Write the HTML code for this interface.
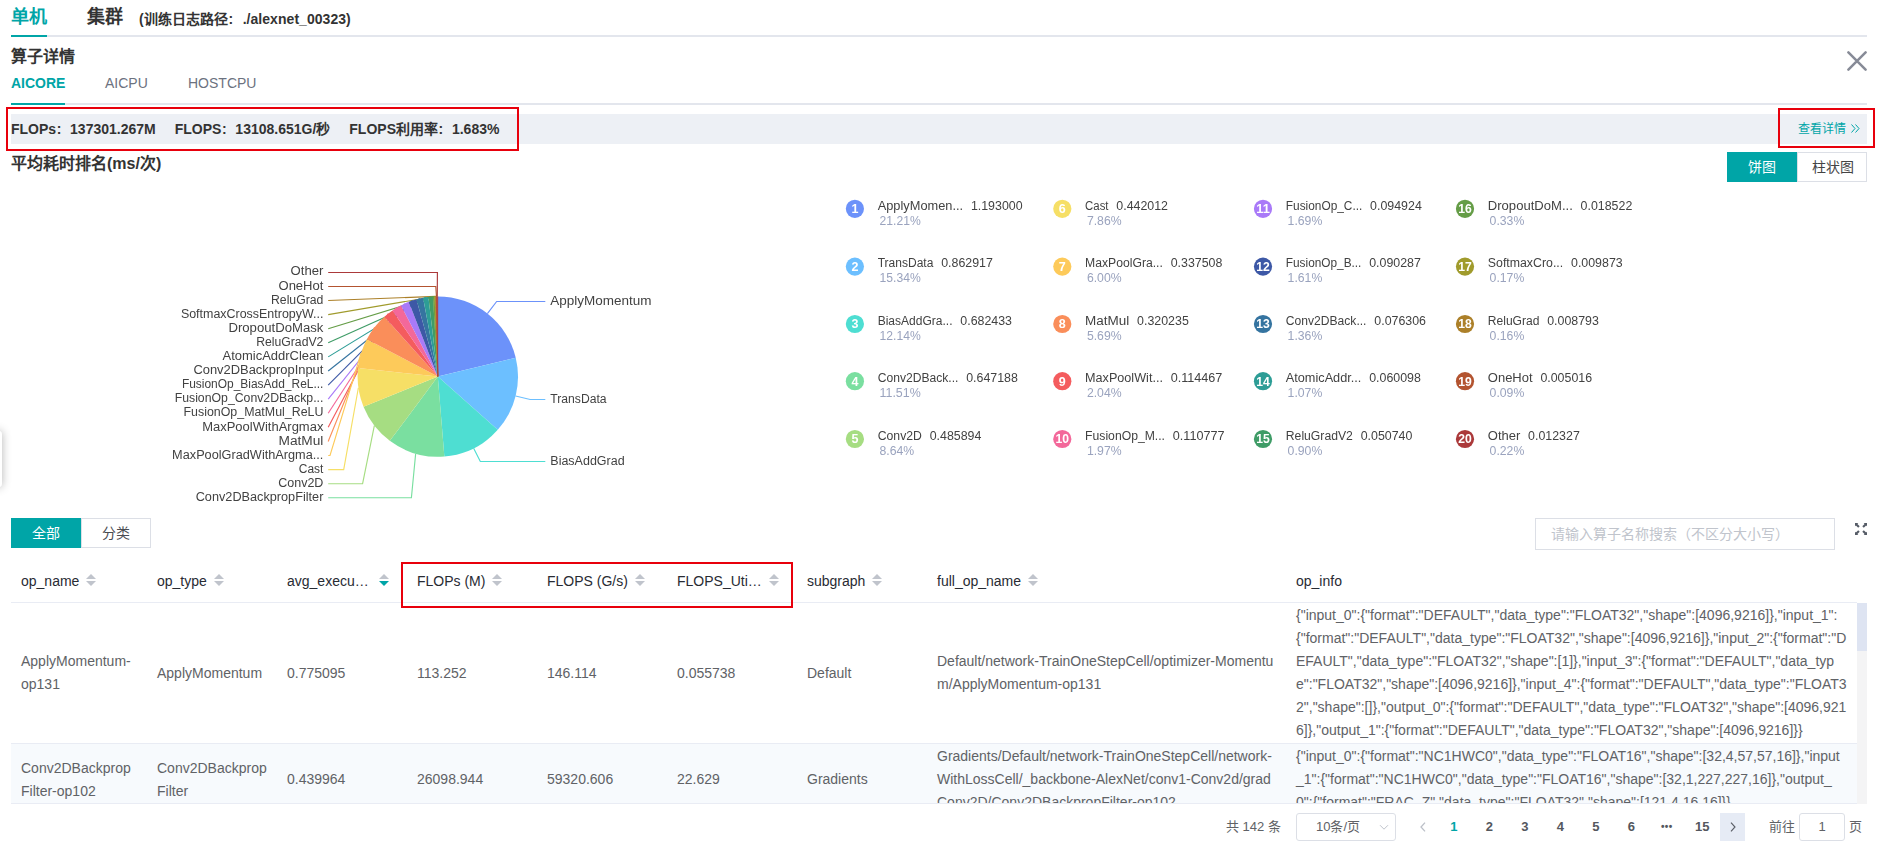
<!DOCTYPE html>
<html lang="zh-CN"><head><meta charset="utf-8"><title>profiling</title>
<style>
*{box-sizing:border-box;margin:0;padding:0}
html,body{width:1883px;height:855px;overflow:hidden;background:#fff}
body{font-family:"Liberation Sans", sans-serif;color:#333;position:relative;font-size:14px}
.abs{position:absolute;white-space:nowrap}
.chart{position:absolute;left:150px;top:185px;will-change:transform;opacity:0.999}
.tab1{font-size:18px;font-weight:bold;line-height:20px;top:7px}
.line{position:absolute;height:2px;background:#E3E6ED}
.btn{position:absolute;height:30px;line-height:28px;text-align:center;font-size:14px;border:1px solid #DCDFE6;background:#fff;color:#4a4c52;width:70px}
.btn.on{background:#00A5A7;border-color:#00A5A7;color:#fff}
.thead{position:absolute;left:11px;top:557px;width:1846px;height:46px;border-bottom:1px solid #E9ECF4;display:flex}
.th{height:45px;line-height:23px;padding:13px 10px 0 10px;color:#282B33;font-size:14px;white-space:nowrap;display:flex}
.st{display:inline-block;position:relative;width:10px;height:23px;margin-left:7px}
.st i{position:absolute;left:0;width:0;height:0;border:5px solid transparent}
.st .u{top:-1px}
.st .d{top:11px}
.tbody{position:absolute;left:11px;top:603px;width:1846px;height:201px;overflow:hidden;border-bottom:1px solid #E9ECF4}
.tr{display:flex;align-items:center;border-bottom:1px solid #E9ECF4}
.tr.r1{height:141px}
.tr.r2{height:72px;background:#F7FAFD}
.td{padding:0 10px;color:#606266;font-size:14px;line-height:23px;white-space:nowrap}
.pg{position:absolute;top:813px;height:28px;line-height:28px;font-size:13px;color:#606266;white-space:nowrap}
.pn{font-weight:bold;color:#54575E;width:35.5px;text-align:center}
</style></head><body>
<div class="abs tab1" style="left:11px;color:#00A5A7">单机</div>
<div class="abs tab1" style="left:87px;color:#333">集群</div>
<div class="abs" style="left:139px;top:10px;font-size:14px;font-weight:bold;line-height:18px;color:#333;letter-spacing:0.05px">(训练日志路径<span style="display:inline-block;margin:0 9.3px 0 0.6px">:</span>./alexnet_00323)</div>
<div class="line" style="left:11px;top:35px;width:1856px"></div>
<div class="line" style="left:11px;top:35px;width:36px;background:#00A5A7"></div>
<div class="abs" style="left:11px;top:47px;font-size:16px;font-weight:bold;line-height:20px;color:#333">算子详情</div>
<div class="abs" style="left:11px;top:74px;font-size:14px;font-weight:bold;line-height:18px;color:#00A5A7">AICORE</div>
<div class="abs" style="left:105px;top:74px;font-size:14px;line-height:18px;color:#6C7280">AICPU</div>
<div class="abs" style="left:188px;top:74px;font-size:14px;line-height:18px;color:#6C7280">HOSTCPU</div>
<div class="line" style="left:11px;top:103px;width:1856px"></div>
<div class="line" style="left:11px;top:103px;width:54px;background:#00A5A7"></div>
<svg class="abs" style="left:1847px;top:51px" width="20" height="20" viewBox="0 0 20 20"><path d="M1.4 1.4L18.6 18.6M18.6 1.4L1.4 18.6" stroke="#878B97" stroke-width="2.5" stroke-linecap="round" fill="none"/></svg>

<div class="abs" style="left:11px;top:114px;width:1856px;height:30px;background:#EDF0F5"></div>
<div class="abs" style="left:11px;top:114px;line-height:31px;font-size:14px;font-weight:bold;color:#333">FLOPs<span style="display:inline-block;margin:0 8.7px 0 0.6px">:</span>137301.267M<span style="display:inline-block;width:19px"></span>FLOPS<span style="display:inline-block;margin:0 8.7px 0 0.6px">:</span>13108.651G/秒<span style="display:inline-block;width:19px"></span>FLOPS利用率<span style="display:inline-block;margin:0 8.7px 0 0.6px">:</span>1.683%</div>
<div class="abs" style="left:1798px;top:114px;line-height:31px;font-size:12px;color:#00A5A7">查看详情</div>
<svg class="abs" style="left:1850px;top:123px" width="11" height="11" viewBox="0 0 11 11"><path d="M1.5 1.5L5 5.5L1.5 9.5M5.5 1.5L9 5.5L5.5 9.5" stroke="#00A5A7" stroke-width="1" fill="none"/></svg>
<div class="abs" style="left:6px;top:107px;width:513px;height:44px;border:2px solid #E8000C"></div>
<div class="abs" style="left:1778px;top:108px;width:97px;height:40px;border:2px solid #E8000C"></div>

<div class="abs" style="left:11px;top:154px;font-size:16px;font-weight:bold;line-height:20px;color:#333">平均耗时排名(ms/次)</div>
<div class="btn on" style="left:1727px;top:152px">饼图</div>
<div class="btn" style="left:1797px;top:152px;padding-left:1px;color:#444">柱状图</div>

<div class="abs" style="left:-8px;top:431px;width:10px;height:56px;background:#fff;border-radius:3px;box-shadow:0 0 10px rgba(0,0,0,0.3)"></div>

<div class="btn on" style="left:11px;top:518px">全部</div>
<div class="btn" style="left:81px;top:518px">分类</div>
<div class="abs" style="left:1535px;top:518px;width:300px;height:32px;border:1px solid #DCDFE6;line-height:30px;padding-left:15px;font-size:14px;color:#C0C4CC">请输入算子名称搜索（不区分大小写）</div>
<svg class="abs" style="left:1855px;top:523px" width="12" height="12" viewBox="0 0 12 12" fill="#555B66"><path d="M0 0h3.3L2.4 0.9 4.7 3.2 3.2 4.7 0.9 2.4 0 3.3z"/><path d="M0 0h3.3L2.4 0.9 4.7 3.2 3.2 4.7 0.9 2.4 0 3.3z" transform="translate(12,0) scale(-1,1)"/><path d="M0 0h3.3L2.4 0.9 4.7 3.2 3.2 4.7 0.9 2.4 0 3.3z" transform="translate(0,12) scale(1,-1)"/><path d="M0 0h3.3L2.4 0.9 4.7 3.2 3.2 4.7 0.9 2.4 0 3.3z" transform="translate(12,12) scale(-1,-1)"/></svg>

<div class="thead"><div class="th" style="width:136px"><span class="hl">op_name</span><span class="st" style="margin-left:7px"><i class="u" style="border-bottom-color:#C0C4CC"></i><i class="d" style="border-top-color:#C0C4CC"></i></span></div><div class="th" style="width:130px"><span class="hl">op_type</span><span class="st" style="margin-left:7px"><i class="u" style="border-bottom-color:#C0C4CC"></i><i class="d" style="border-top-color:#C0C4CC"></i></span></div><div class="th" style="width:130px"><span class="hl">avg_execu…</span><span class="st" style="margin-left:10px"><i class="u" style="border-bottom-color:#C0C4CC"></i><i class="d" style="border-top-color:#00A5A7"></i></span></div><div class="th" style="width:130px"><span class="hl">FLOPs (M)</span><span class="st" style="margin-left:7px"><i class="u" style="border-bottom-color:#C0C4CC"></i><i class="d" style="border-top-color:#C0C4CC"></i></span></div><div class="th" style="width:130px"><span class="hl">FLOPS (G/s)</span><span class="st" style="margin-left:7px"><i class="u" style="border-bottom-color:#C0C4CC"></i><i class="d" style="border-top-color:#C0C4CC"></i></span></div><div class="th" style="width:130px"><span class="hl">FLOPS_Uti…</span><span class="st" style="margin-left:7.5px"><i class="u" style="border-bottom-color:#C0C4CC"></i><i class="d" style="border-top-color:#C0C4CC"></i></span></div><div class="th" style="width:130px"><span class="hl">subgraph</span><span class="st" style="margin-left:7px"><i class="u" style="border-bottom-color:#C0C4CC"></i><i class="d" style="border-top-color:#C0C4CC"></i></span></div><div class="th" style="width:359px"><span class="hl">full_op_name</span><span class="st" style="margin-left:7px"><i class="u" style="border-bottom-color:#C0C4CC"></i><i class="d" style="border-top-color:#C0C4CC"></i></span></div><div class="th" style="width:561px"><span class="hl">op_info</span></div></div>
<div class="tbody"><div class="tr r1"><div class="td" style="width:136px"><div class="cell">ApplyMomentum-<br>op131</div></div><div class="td" style="width:130px"><div class="cell">ApplyMomentum</div></div><div class="td" style="width:130px"><div class="cell">0.775095</div></div><div class="td" style="width:130px"><div class="cell">113.252</div></div><div class="td" style="width:130px"><div class="cell">146.114</div></div><div class="td" style="width:130px"><div class="cell">0.055738</div></div><div class="td" style="width:130px"><div class="cell">Default</div></div><div class="td" style="width:359px"><div class="cell">Default/network-TrainOneStepCell/optimizer-Momentu<br>m/ApplyMomentum-op131</div></div><div class="td" style="width:561px"><div class="cell">{"input_0":{"format":"DEFAULT","data_type":"FLOAT32","shape":[4096,9216]},"input_1":<br>{"format":"DEFAULT","data_type":"FLOAT32","shape":[4096,9216]},"input_2":{"format":"D<br>EFAULT","data_type":"FLOAT32","shape":[1]},"input_3":{"format":"DEFAULT","data_typ<br>e":"FLOAT32","shape":[4096,9216]},"input_4":{"format":"DEFAULT","data_type":"FLOAT3<br>2","shape":[]},"output_0":{"format":"DEFAULT","data_type":"FLOAT32","shape":[4096,921<br>6]},"output_1":{"format":"DEFAULT","data_type":"FLOAT32","shape":[4096,9216]}}</div></div></div><div class="tr r2"><div class="td" style="width:136px"><div class="cell">Conv2DBackprop<br>Filter-op102</div></div><div class="td" style="width:130px"><div class="cell">Conv2DBackprop<br>Filter</div></div><div class="td" style="width:130px"><div class="cell">0.439964</div></div><div class="td" style="width:130px"><div class="cell">26098.944</div></div><div class="td" style="width:130px"><div class="cell">59320.606</div></div><div class="td" style="width:130px"><div class="cell">22.629</div></div><div class="td" style="width:130px"><div class="cell">Gradients</div></div><div class="td" style="width:359px"><div class="cell">Gradients/Default/network-TrainOneStepCell/network-<br>WithLossCell/_backbone-AlexNet/conv1-Conv2d/grad<br>Conv2D/Conv2DBackpropFilter-op102</div></div><div class="td" style="width:561px"><div class="cell">{"input_0":{"format":"NC1HWC0","data_type":"FLOAT16","shape":[32,4,57,57,16]},"input<br>_1":{"format":"NC1HWC0","data_type":"FLOAT16","shape":[32,1,227,227,16]},"output_<br>0":{"format":"FRAC_Z","data_type":"FLOAT32","shape":[121,4,16,16]}}</div></div></div></div>
<div class="abs" style="left:1857px;top:603px;width:10px;height:201px;background:#F4F4F5"></div>
<div class="abs" style="left:1857px;top:603px;width:10px;height:48px;background:#DEE4F2"></div>
<div class="abs" style="left:6px;top:0;width:0;height:0"></div>
<div class="abs" style="left:401px;top:562px;width:392px;height:46px;border:2px solid #E8000C"></div>

<div class="pg" style="left:1226px">共 142 条</div>
<div class="pg" style="left:1296px;width:100px;border:1px solid #DCDFE6;border-radius:3px;line-height:26px;padding-left:19px">10条/页</div>
<svg class="abs" style="left:1379px;top:824px" width="10" height="7" viewBox="0 0 10 7"><path d="M1 1.2L5 5.2L9 1.2" stroke="#C0C4CC" stroke-width="1" fill="none"/></svg>
<svg class="abs" style="left:1418px;top:820px" width="10" height="14" viewBox="0 0 10 14"><path d="M7 2.6L3 7L7 11.4" stroke="#BCC0C8" stroke-width="1.3" fill="none"/></svg>
<div class="pg" style="left:1436px;display:flex"><div class="pn" style="color:#00A5A7">1</div><div class="pn">2</div><div class="pn">3</div><div class="pn">4</div><div class="pn">5</div><div class="pn">6</div><div class="pn" style="font-size:10px;letter-spacing:0.3px">•••</div><div class="pn">15</div></div>
<div class="abs" style="left:1720px;top:813px;width:25px;height:28px;background:#E6EBF5"></div>
<svg class="abs" style="left:1728px;top:820px" width="10" height="14" viewBox="0 0 10 14"><path d="M3 2.6L7 7L3 11.4" stroke="#5A5E66" stroke-width="1.15" fill="none"/></svg>
<div class="pg" style="left:1769px">前往</div>
<div class="pg" style="left:1799px;width:46px;border:1px solid #DCDFE6;border-radius:3px;line-height:26px;text-align:center">1</div>
<div class="pg" style="left:1849px">页</div>
<svg class="chart" width="1600" height="330" viewBox="150 185 1600 330" font-family='"Liberation Sans", sans-serif' font-size="12" fill="#424242">
<g><polyline points="328.20,272.50 437.40,272.50 437.25,296.40" fill="none" stroke="#AB393A" stroke-width="1.15"/><polyline points="328.20,286.50 435.80,286.50 436.47,296.41" fill="none" stroke="#B35430" stroke-width="1.15"/><polyline points="328.20,300.49 435.85,296.42" fill="none" stroke="#AC8029" stroke-width="1.15"/><polyline points="328.20,314.59 435.02,296.45" fill="none" stroke="#A09B2C" stroke-width="1.15"/><polyline points="328.20,328.68 433.75,296.50" fill="none" stroke="#659D47" stroke-width="1.15"/><polyline points="328.20,342.77 430.65,296.72" fill="none" stroke="#3F9C67" stroke-width="1.15"/><polyline points="328.20,356.87 425.72,297.31" fill="none" stroke="#2D9D96" stroke-width="1.15"/><polyline points="328.20,370.96 419.72,298.46" fill="none" stroke="#3574A0" stroke-width="1.15"/><polyline points="328.20,385.05 412.54,300.48" fill="none" stroke="#3D58A6" stroke-width="1.15"/><polyline points="328.20,399.14 404.81,303.50" fill="none" stroke="#A97AF8" stroke-width="1.15"/><polyline points="328.20,413.24 396.64,307.77" fill="none" stroke="#F3689A" stroke-width="1.15"/><polyline points="328.20,427.33 388.33,313.47" fill="none" stroke="#F45C5E" stroke-width="1.15"/><polyline points="328.20,441.42 374.60,327.22" fill="none" stroke="#FA8E5A" stroke-width="1.15"/><polyline points="328.20,455.52 330.00,455.52 361.08,353.22" fill="none" stroke="#FDCA5A" stroke-width="1.15"/><polyline points="328.20,469.61 343.70,469.61 358.38,387.77" fill="none" stroke="#F6DF66" stroke-width="1.15"/><polyline points="328.20,483.70 362.60,483.70 374.35,425.65" fill="none" stroke="#A6DD82" stroke-width="1.15"/><polyline points="328.20,497.79 411.40,497.79 415.66,453.68" fill="none" stroke="#7ADFA0" stroke-width="1.15"/><polyline points="487.38,313.56 496.66,301.50 545.3,301.50" fill="none" stroke="#6C92FA" stroke-width="1.15"/><polyline points="515.62,396.00 530.17,399.50 545.3,399.50" fill="none" stroke="#6CBFFF" stroke-width="1.15"/><polyline points="473.63,448.35 480.33,461.50 545.3,461.50" fill="none" stroke="#4EDED2" stroke-width="1.15"/></g>
<g><path d="M437.8 376.6L437.80 296.40A80.2 80.2 0 0 1 515.74 357.71Z" fill="#6C92FA"/><path d="M437.8 376.6L515.74 357.71A80.2 80.2 0 0 1 497.76 429.87Z" fill="#6CBFFF"/><path d="M437.8 376.6L497.76 429.87A80.2 80.2 0 0 1 444.36 456.53Z" fill="#4EDED2"/><path d="M437.8 376.6L444.36 456.53A80.2 80.2 0 0 1 389.83 440.87Z" fill="#7ADFA0"/><path d="M437.8 376.6L389.83 440.87A80.2 80.2 0 0 1 363.52 406.84Z" fill="#A6DD82"/><path d="M437.8 376.6L363.52 406.84A80.2 80.2 0 0 1 358.06 368.02Z" fill="#F6DF66"/><path d="M437.8 376.6L358.06 368.02A80.2 80.2 0 0 1 366.82 339.26Z" fill="#FDCA5A"/><path d="M437.8 376.6L366.82 339.26A80.2 80.2 0 0 1 384.40 316.77Z" fill="#FA8E5A"/><path d="M437.8 376.6L384.40 316.77A80.2 80.2 0 0 1 392.47 310.44Z" fill="#F45C5E"/><path d="M437.8 376.6L392.47 310.44A80.2 80.2 0 0 1 400.98 305.35Z" fill="#F3689A"/><path d="M437.8 376.6L400.98 305.35A80.2 80.2 0 0 1 408.73 301.85Z" fill="#A97AF8"/><path d="M437.8 376.6L408.73 301.85A80.2 80.2 0 0 1 416.41 299.31Z" fill="#3D58A6"/><path d="M437.8 376.6L416.41 299.31A80.2 80.2 0 0 1 423.07 297.77Z" fill="#3574A0"/><path d="M437.8 376.6L423.07 297.77A80.2 80.2 0 0 1 428.39 296.95Z" fill="#2D9D96"/><path d="M437.8 376.6L428.39 296.95A80.2 80.2 0 0 1 432.92 296.55Z" fill="#3F9C67"/><path d="M437.8 376.6L432.92 296.55A80.2 80.2 0 0 1 434.57 296.46Z" fill="#659D47" stroke="#659D47" stroke-width="0.5"/><path d="M437.8 376.6L434.57 296.46A80.2 80.2 0 0 1 435.46 296.43Z" fill="#A09B2C" stroke="#A09B2C" stroke-width="0.5"/><path d="M437.8 376.6L435.46 296.43A80.2 80.2 0 0 1 436.25 296.42Z" fill="#AC8029" stroke="#AC8029" stroke-width="0.5"/><path d="M437.8 376.6L436.25 296.42A80.2 80.2 0 0 1 436.70 296.41Z" fill="#B35430" stroke="#B35430" stroke-width="0.5"/><path d="M437.8 376.6L436.70 296.41A80.2 80.2 0 0 1 437.80 296.40Z" fill="#AB393A" stroke="#AB393A" stroke-width="0.5"/></g>
<g><text x="323.4" y="274.80" font-size="12.3" text-anchor="end" textLength="32.8" lengthAdjust="spacingAndGlyphs">Other</text><text x="323.4" y="289.90" font-size="12.3" text-anchor="end" textLength="44.9" lengthAdjust="spacingAndGlyphs">OneHot</text><text x="323.4" y="303.90" font-size="12.3" text-anchor="end" textLength="52.4" lengthAdjust="spacingAndGlyphs">ReluGrad</text><text x="323.4" y="317.90" font-size="12.3" text-anchor="end" textLength="142.5" lengthAdjust="spacingAndGlyphs">SoftmaxCrossEntropyW...</text><text x="323.4" y="331.90" font-size="12.3" text-anchor="end" textLength="95" lengthAdjust="spacingAndGlyphs">DropoutDoMask</text><text x="323.4" y="345.90" font-size="12.3" text-anchor="end" textLength="67.2" lengthAdjust="spacingAndGlyphs">ReluGradV2</text><text x="323.4" y="359.90" font-size="12.3" text-anchor="end" textLength="100.9" lengthAdjust="spacingAndGlyphs">AtomicAddrClean</text><text x="323.4" y="373.90" font-size="12.3" text-anchor="end" textLength="130" lengthAdjust="spacingAndGlyphs">Conv2DBackpropInput</text><text x="323.4" y="387.90" font-size="12.3" text-anchor="end" textLength="141.5" lengthAdjust="spacingAndGlyphs">FusionOp_BiasAdd_ReL...</text><text x="323.4" y="401.90" font-size="12.3" text-anchor="end" textLength="148.7" lengthAdjust="spacingAndGlyphs">FusionOp_Conv2DBackp...</text><text x="323.4" y="415.90" font-size="12.3" text-anchor="end" textLength="139.9" lengthAdjust="spacingAndGlyphs">FusionOp_MatMul_ReLU</text><text x="323.4" y="430.90" font-size="12.3" text-anchor="end" textLength="121.2" lengthAdjust="spacingAndGlyphs">MaxPoolWithArgmax</text><text x="323.4" y="444.90" font-size="12.3" text-anchor="end" textLength="44.9" lengthAdjust="spacingAndGlyphs">MatMul</text><text x="323.4" y="458.90" font-size="12.3" text-anchor="end" textLength="151.3" lengthAdjust="spacingAndGlyphs">MaxPoolGradWithArgma...</text><text x="323.4" y="472.90" font-size="12.3" text-anchor="end" textLength="24.6" lengthAdjust="spacingAndGlyphs">Cast</text><text x="323.4" y="486.90" font-size="12.3" text-anchor="end" textLength="45.2" lengthAdjust="spacingAndGlyphs">Conv2D</text><text x="323.4" y="500.90" font-size="12.3" text-anchor="end" textLength="127.7" lengthAdjust="spacingAndGlyphs">Conv2DBackpropFilter</text><text x="550.3" y="304.90" font-size="12.3" textLength="101.2" lengthAdjust="spacingAndGlyphs">ApplyMomentum</text><text x="550.3" y="402.90" font-size="12.3" textLength="56.3" lengthAdjust="spacingAndGlyphs">TransData</text><text x="550.3" y="464.90" font-size="12.3" textLength="74.3" lengthAdjust="spacingAndGlyphs">BiasAddGrad</text></g>
<g><circle cx="854.9" cy="208.8" r="9.1" fill="#6C92FA"/><text x="854.9" y="213.2" text-anchor="middle" fill="#fff" font-size="12.5" font-weight="bold">1</text><text x="877.7" y="210.2" textLength="85.4" lengthAdjust="spacingAndGlyphs">ApplyMomen...</text><text x="970.9" y="210.2" textLength="51.7" lengthAdjust="spacingAndGlyphs">1.193000</text><text x="879.5" y="225.0" fill="#9AA3BE" textLength="41.2" lengthAdjust="spacingAndGlyphs">21.21%</text><circle cx="854.9" cy="266.6" r="9.1" fill="#6CBFFF"/><text x="854.9" y="271.0" text-anchor="middle" fill="#fff" font-size="12.5" font-weight="bold">2</text><text x="877.7" y="266.9" textLength="55.7" lengthAdjust="spacingAndGlyphs">TransData</text><text x="941.2" y="266.9" textLength="51.7" lengthAdjust="spacingAndGlyphs">0.862917</text><text x="879.5" y="281.7" fill="#9AA3BE" textLength="41.2" lengthAdjust="spacingAndGlyphs">15.34%</text><circle cx="854.9" cy="324.0" r="9.1" fill="#4EDED2"/><text x="854.9" y="328.4" text-anchor="middle" fill="#fff" font-size="12.5" font-weight="bold">3</text><text x="877.7" y="325.1" textLength="74.8" lengthAdjust="spacingAndGlyphs">BiasAddGra...</text><text x="960.3" y="325.1" textLength="51.7" lengthAdjust="spacingAndGlyphs">0.682433</text><text x="879.5" y="339.9" fill="#9AA3BE" textLength="41.2" lengthAdjust="spacingAndGlyphs">12.14%</text><circle cx="854.9" cy="381.2" r="9.1" fill="#7ADFA0"/><text x="854.9" y="385.6" text-anchor="middle" fill="#fff" font-size="12.5" font-weight="bold">4</text><text x="877.7" y="382.2" textLength="80.7" lengthAdjust="spacingAndGlyphs">Conv2DBack...</text><text x="966.2" y="382.2" textLength="51.7" lengthAdjust="spacingAndGlyphs">0.647188</text><text x="879.5" y="397.0" fill="#9AA3BE" textLength="41.2" lengthAdjust="spacingAndGlyphs">11.51%</text><circle cx="854.9" cy="439.0" r="9.1" fill="#A6DD82"/><text x="854.9" y="443.4" text-anchor="middle" fill="#fff" font-size="12.5" font-weight="bold">5</text><text x="877.7" y="440.0" textLength="44.2" lengthAdjust="spacingAndGlyphs">Conv2D</text><text x="929.7" y="440.0" textLength="51.7" lengthAdjust="spacingAndGlyphs">0.485894</text><text x="879.5" y="454.8" fill="#9AA3BE" textLength="34.7" lengthAdjust="spacingAndGlyphs">8.64%</text><circle cx="1062.3" cy="208.8" r="9.1" fill="#F6DF66"/><text x="1062.3" y="213.2" text-anchor="middle" fill="#fff" font-size="12.5" font-weight="bold">6</text><text x="1085.1" y="210.2" textLength="23.4" lengthAdjust="spacingAndGlyphs">Cast</text><text x="1116.3" y="210.2" textLength="51.7" lengthAdjust="spacingAndGlyphs">0.442012</text><text x="1086.9" y="225.0" fill="#9AA3BE" textLength="34.7" lengthAdjust="spacingAndGlyphs">7.86%</text><circle cx="1062.3" cy="266.6" r="9.1" fill="#FDCA5A"/><text x="1062.3" y="271.0" text-anchor="middle" fill="#fff" font-size="12.5" font-weight="bold">7</text><text x="1085.1" y="266.9" textLength="77.8" lengthAdjust="spacingAndGlyphs">MaxPoolGra...</text><text x="1170.7" y="266.9" textLength="51.7" lengthAdjust="spacingAndGlyphs">0.337508</text><text x="1086.9" y="281.7" fill="#9AA3BE" textLength="34.7" lengthAdjust="spacingAndGlyphs">6.00%</text><circle cx="1062.3" cy="324.0" r="9.1" fill="#FA8E5A"/><text x="1062.3" y="328.4" text-anchor="middle" fill="#fff" font-size="12.5" font-weight="bold">8</text><text x="1085.1" y="325.1" textLength="44.2" lengthAdjust="spacingAndGlyphs">MatMul</text><text x="1137.1" y="325.1" textLength="51.7" lengthAdjust="spacingAndGlyphs">0.320235</text><text x="1086.9" y="339.9" fill="#9AA3BE" textLength="34.7" lengthAdjust="spacingAndGlyphs">5.69%</text><circle cx="1062.3" cy="381.2" r="9.1" fill="#F45C5E"/><text x="1062.3" y="385.6" text-anchor="middle" fill="#fff" font-size="12.5" font-weight="bold">9</text><text x="1085.1" y="382.2" textLength="77.8" lengthAdjust="spacingAndGlyphs">MaxPoolWit...</text><text x="1170.7" y="382.2" textLength="51.7" lengthAdjust="spacingAndGlyphs">0.114467</text><text x="1086.9" y="397.0" fill="#9AA3BE" textLength="34.7" lengthAdjust="spacingAndGlyphs">2.04%</text><circle cx="1062.3" cy="439.0" r="9.1" fill="#F3689A"/><text x="1062.3" y="443.4" text-anchor="middle" fill="#fff" font-size="12.5" font-weight="bold" textLength="13.5" lengthAdjust="spacingAndGlyphs">10</text><text x="1085.1" y="440.0" textLength="79.9" lengthAdjust="spacingAndGlyphs">FusionOp_M...</text><text x="1172.8" y="440.0" textLength="51.7" lengthAdjust="spacingAndGlyphs">0.110777</text><text x="1086.9" y="454.8" fill="#9AA3BE" textLength="34.7" lengthAdjust="spacingAndGlyphs">1.97%</text><circle cx="1263.0" cy="208.8" r="9.1" fill="#A97AF8"/><text x="1263.0" y="213.2" text-anchor="middle" fill="#fff" font-size="12.5" font-weight="bold" textLength="13.5" lengthAdjust="spacingAndGlyphs">11</text><text x="1285.8" y="210.2" textLength="76.5" lengthAdjust="spacingAndGlyphs">FusionOp_C...</text><text x="1370.1" y="210.2" textLength="51.7" lengthAdjust="spacingAndGlyphs">0.094924</text><text x="1287.6" y="225.0" fill="#9AA3BE" textLength="34.7" lengthAdjust="spacingAndGlyphs">1.69%</text><circle cx="1263.0" cy="266.6" r="9.1" fill="#3D58A6"/><text x="1263.0" y="271.0" text-anchor="middle" fill="#fff" font-size="12.5" font-weight="bold" textLength="13.5" lengthAdjust="spacingAndGlyphs">12</text><text x="1285.8" y="266.9" textLength="75.6" lengthAdjust="spacingAndGlyphs">FusionOp_B...</text><text x="1369.2" y="266.9" textLength="51.7" lengthAdjust="spacingAndGlyphs">0.090287</text><text x="1287.6" y="281.7" fill="#9AA3BE" textLength="34.7" lengthAdjust="spacingAndGlyphs">1.61%</text><circle cx="1263.0" cy="324.0" r="9.1" fill="#3574A0"/><text x="1263.0" y="328.4" text-anchor="middle" fill="#fff" font-size="12.5" font-weight="bold" textLength="13.5" lengthAdjust="spacingAndGlyphs">13</text><text x="1285.8" y="325.1" textLength="80.7" lengthAdjust="spacingAndGlyphs">Conv2DBack...</text><text x="1374.3" y="325.1" textLength="51.7" lengthAdjust="spacingAndGlyphs">0.076306</text><text x="1287.6" y="339.9" fill="#9AA3BE" textLength="34.7" lengthAdjust="spacingAndGlyphs">1.36%</text><circle cx="1263.0" cy="381.2" r="9.1" fill="#2D9D96"/><text x="1263.0" y="385.6" text-anchor="middle" fill="#fff" font-size="12.5" font-weight="bold" textLength="13.5" lengthAdjust="spacingAndGlyphs">14</text><text x="1285.8" y="382.2" textLength="75.6" lengthAdjust="spacingAndGlyphs">AtomicAddr...</text><text x="1369.2" y="382.2" textLength="51.7" lengthAdjust="spacingAndGlyphs">0.060098</text><text x="1287.6" y="397.0" fill="#9AA3BE" textLength="34.7" lengthAdjust="spacingAndGlyphs">1.07%</text><circle cx="1263.0" cy="439.0" r="9.1" fill="#3F9C67"/><text x="1263.0" y="443.4" text-anchor="middle" fill="#fff" font-size="12.5" font-weight="bold" textLength="13.5" lengthAdjust="spacingAndGlyphs">15</text><text x="1285.8" y="440.0" textLength="67.1" lengthAdjust="spacingAndGlyphs">ReluGradV2</text><text x="1360.7" y="440.0" textLength="51.7" lengthAdjust="spacingAndGlyphs">0.050740</text><text x="1287.6" y="454.8" fill="#9AA3BE" textLength="34.7" lengthAdjust="spacingAndGlyphs">0.90%</text><circle cx="1465.0" cy="208.8" r="9.1" fill="#659D47"/><text x="1465.0" y="213.2" text-anchor="middle" fill="#fff" font-size="12.5" font-weight="bold" textLength="13.5" lengthAdjust="spacingAndGlyphs">16</text><text x="1487.8" y="210.2" textLength="85.0" lengthAdjust="spacingAndGlyphs">DropoutDoM...</text><text x="1580.6" y="210.2" textLength="51.7" lengthAdjust="spacingAndGlyphs">0.018522</text><text x="1489.6" y="225.0" fill="#9AA3BE" textLength="34.7" lengthAdjust="spacingAndGlyphs">0.33%</text><circle cx="1465.0" cy="266.6" r="9.1" fill="#A09B2C"/><text x="1465.0" y="271.0" text-anchor="middle" fill="#fff" font-size="12.5" font-weight="bold" textLength="13.5" lengthAdjust="spacingAndGlyphs">17</text><text x="1487.8" y="266.9" textLength="75.4" lengthAdjust="spacingAndGlyphs">SoftmaxCro...</text><text x="1571.0" y="266.9" textLength="51.7" lengthAdjust="spacingAndGlyphs">0.009873</text><text x="1489.6" y="281.7" fill="#9AA3BE" textLength="34.7" lengthAdjust="spacingAndGlyphs">0.17%</text><circle cx="1465.0" cy="324.0" r="9.1" fill="#AC8029"/><text x="1465.0" y="328.4" text-anchor="middle" fill="#fff" font-size="12.5" font-weight="bold" textLength="13.5" lengthAdjust="spacingAndGlyphs">18</text><text x="1487.8" y="325.1" textLength="51.6" lengthAdjust="spacingAndGlyphs">ReluGrad</text><text x="1547.2" y="325.1" textLength="51.7" lengthAdjust="spacingAndGlyphs">0.008793</text><text x="1489.6" y="339.9" fill="#9AA3BE" textLength="34.7" lengthAdjust="spacingAndGlyphs">0.16%</text><circle cx="1465.0" cy="381.2" r="9.1" fill="#B35430"/><text x="1465.0" y="385.6" text-anchor="middle" fill="#fff" font-size="12.5" font-weight="bold" textLength="13.5" lengthAdjust="spacingAndGlyphs">19</text><text x="1487.8" y="382.2" textLength="44.8" lengthAdjust="spacingAndGlyphs">OneHot</text><text x="1540.4" y="382.2" textLength="51.7" lengthAdjust="spacingAndGlyphs">0.005016</text><text x="1489.6" y="397.0" fill="#9AA3BE" textLength="34.7" lengthAdjust="spacingAndGlyphs">0.09%</text><circle cx="1465.0" cy="439.0" r="9.1" fill="#AB393A"/><text x="1465.0" y="443.4" text-anchor="middle" fill="#fff" font-size="12.5" font-weight="bold" textLength="13.5" lengthAdjust="spacingAndGlyphs">20</text><text x="1487.8" y="440.0" textLength="32.5" lengthAdjust="spacingAndGlyphs">Other</text><text x="1528.1" y="440.0" textLength="51.7" lengthAdjust="spacingAndGlyphs">0.012327</text><text x="1489.6" y="454.8" fill="#9AA3BE" textLength="34.7" lengthAdjust="spacingAndGlyphs">0.22%</text></g>
</svg>
</body></html>
